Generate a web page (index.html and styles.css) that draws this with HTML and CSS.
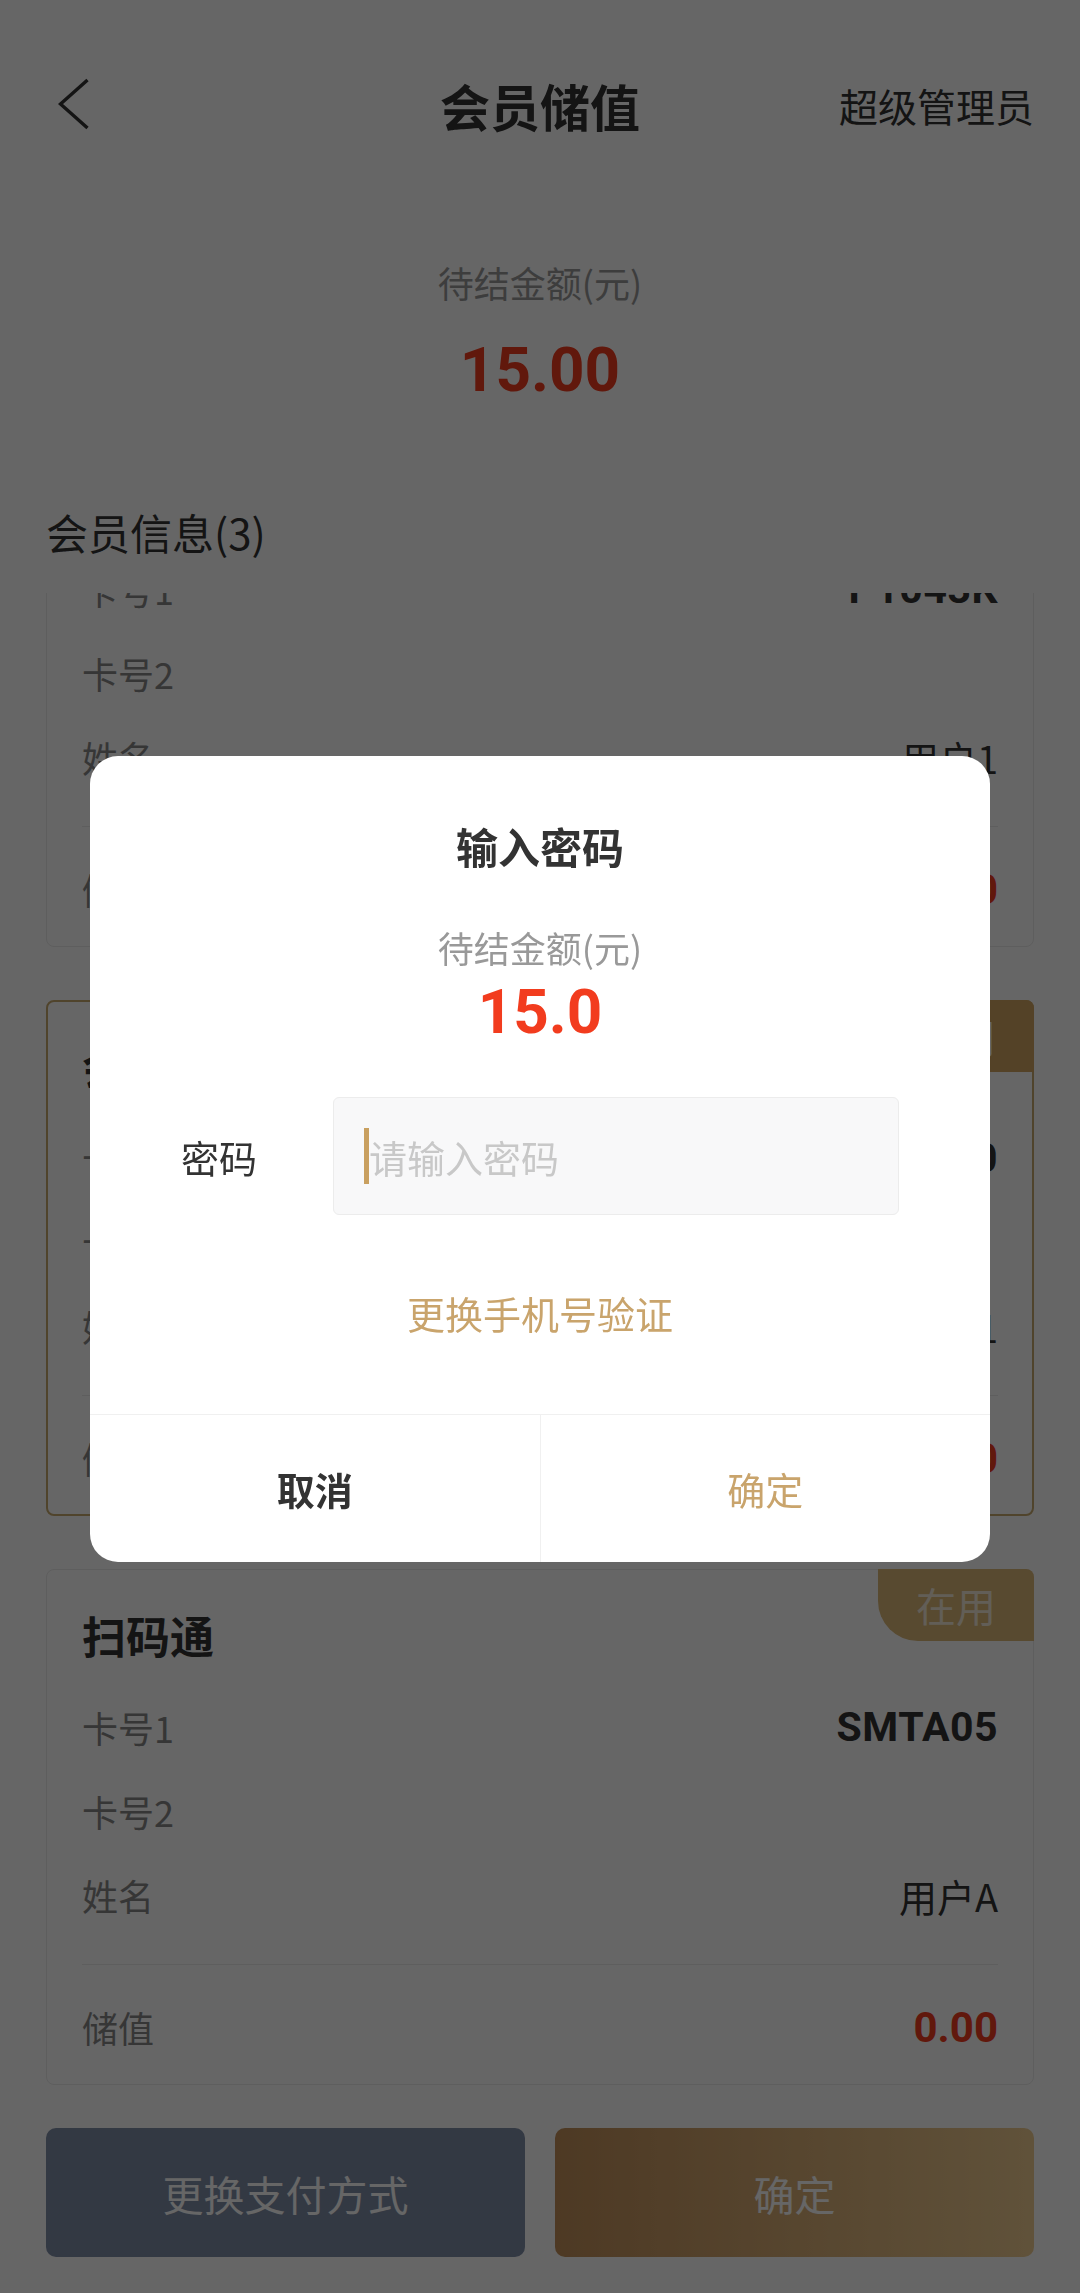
FILE: index.html
```html
<!DOCTYPE html>
<html lang="zh-CN">
<head>
<meta charset="utf-8">
<title>会员储值</title>
<link rel="stylesheet" href="styles.css">
</head>
<body>
<div class="page">
  <header class="nav">
    <span class="nav-back">
      <svg width="32" height="52" viewBox="0 0 32 52"><polyline points="29.5,2 2.5,26 29.5,50" fill="none" stroke="#333" stroke-width="3.4"/></svg>
    </span>
    <h1 class="nav-title">会员储值</h1>
    <span class="nav-user">超级管理员</span>
  </header>

  <section class="summary">
    <div class="summary-label">待结金额(元)</div>
    <div class="summary-amount">15.00</div>
  </section>

  <div class="section-title">会员信息(3)</div>

  <div class="card-list">
    <div class="card-track">
      <div class="card">
        <div class="card-title">会员卡</div>
        <div class="card-fields">
          <div class="field"><span class="field-label">卡号1</span><span class="field-value strong">P1043K</span></div>
          <div class="field"><span class="field-label">卡号2</span><span class="field-value"></span></div>
          <div class="field"><span class="field-label">姓名</span><span class="field-value">用户1</span></div>
        </div>
        <div class="card-divider"></div>
        <div class="field total"><span class="field-label">储值</span><span class="field-value money">0.00</span></div>
      </div>

      <div class="card active">
        <div class="card-title">会员卡</div>
        <span class="badge">在用</span>
        <div class="card-fields">
          <div class="field"><span class="field-label">卡号1</span><span class="field-value strong">HY0010</span></div>
          <div class="field"><span class="field-label">卡号2</span><span class="field-value"></span></div>
          <div class="field"><span class="field-label">姓名</span><span class="field-value">用户1</span></div>
        </div>
        <div class="card-divider"></div>
        <div class="field total"><span class="field-label">储值</span><span class="field-value money">0.00</span></div>
      </div>

      <div class="card">
        <div class="card-title">扫码通</div>
        <span class="badge muted">在用</span>
        <div class="card-fields">
          <div class="field"><span class="field-label">卡号1</span><span class="field-value strong">SMTA05</span></div>
          <div class="field"><span class="field-label">卡号2</span><span class="field-value"></span></div>
          <div class="field"><span class="field-label">姓名</span><span class="field-value">用户A</span></div>
        </div>
        <div class="card-divider"></div>
        <div class="field total"><span class="field-label">储值</span><span class="field-value money">0.00</span></div>
      </div>
    </div>
  </div>

  <footer class="actions">
    <button class="action-btn secondary">更换支付方式</button>
    <button class="action-btn primary">确定</button>
  </footer>
</div>

<div class="mask">
  <div class="dialog">
    <div class="dialog-title">输入密码</div>
    <div class="dialog-label">待结金额(元)</div>
    <div class="dialog-amount">15.0</div>
    <div class="pwd-row">
      <span class="pwd-label">密码</span>
      <div class="pwd-input"><span class="caret"></span><span class="placeholder">请输入密码</span></div>
    </div>
    <div class="switch-link">更换手机号验证</div>
    <div class="dialog-actions">
      <div class="dialog-btn cancel">取消</div>
      <div class="dialog-btn confirm">确定</div>
    </div>
  </div>
</div>
</body>
</html>
```

FILE: styles.css
```css
* { box-sizing: border-box; margin: 0; padding: 0; }
html, body { width: 1080px; height: 2293px; }
body {
  font-family: "Noto Sans CJK SC", "Noto Sans", sans-serif;
  background: #fff;
  color: #333;
  overflow: hidden;
}

.page {
  height: 2293px;
  display: flex;
  flex-direction: column;
  padding: 0 46px;
}

/* nav */
.nav {
  height: 210px;
  flex: none;
  display: grid;
  grid-template-columns: 1fr auto 1fr;
  align-items: center;
}
.nav-back { display: flex; margin-left: 12px; margin-top: -2px; }
.nav-title { font-size: 50px; line-height: 70px; font-weight: 700; color: #333; }
.nav-user { justify-self: end; font-size: 39px; line-height: 60px; color: #333; }

/* summary */
.summary {
  flex: none;
  display: flex;
  flex-direction: column;
  align-items: center;
  padding-top: 47px;
}
.summary-label { font-size: 36px; line-height: 50px; color: #999; }
.summary-amount {
  margin-top: 25px;
  font-family: Roboto, sans-serif;
  font-weight: 700;
  font-size: 62px;
  line-height: 76px;
  color: #f23c1e;
}

.section-title {
  flex: none;
  margin-top: 94px;
  font-size: 42px;
  line-height: 60px;
  color: #333;
}

/* list */
.card-list {
  flex: 1;
  min-height: 0;
  margin-top: 31px;
  overflow: hidden;
}
.card-track {
  margin-top: -162px;
  display: flex;
  flex-direction: column;
  gap: 53px;
}
.card {
  position: relative;
  background: #fff;
  border: 1px solid #ebebeb;
  border-radius: 8px;
  padding: 23px 35px 15px;
}
.card.active {
  border: 2px solid #c9aa6e;
  padding: 22px 34px 14px;
}
.card-title {
  height: 84px;
  display: flex;
  align-items: center;
  font-size: 44px;
  font-weight: 700;
  color: #333;
}
.card-fields { margin-top: 8px; }
.field {
  height: 84px;
  display: flex;
  align-items: center;
  justify-content: space-between;
}
.field-label { font-size: 36px; color: #888; }
.field-value { font-size: 38px; color: #333; }
.field-value.strong {
  font-family: Roboto, sans-serif;
  font-weight: 700;
  font-size: 41px;
  letter-spacing: 0.5px;
}
.field-value.money {
  font-family: Roboto, sans-serif;
  font-weight: 700;
  font-size: 42px;
  color: #f23c1e;
}
.card-divider { margin-top: 27px; height: 1px; background: #ececec; }
.field.total { margin-top: 20px; }

.badge {
  position: absolute;
  top: -1px;
  right: -1px;
  width: 156px;
  height: 72px;
  border-radius: 0 8px 0 40px;
  background: #d1a662;
  color: #fff;
  font-size: 40px;
  display: flex;
  align-items: center;
  justify-content: center;
}
.card.active .badge { top: -2px; right: -2px; }
.badge.muted { background: #dcb878; color: #f6ecd9; }

/* footer */
.actions {
  flex: none;
  display: flex;
  gap: 30px;
  padding: 20px 0 36px;
}
.action-btn {
  flex: 1;
  height: 129px;
  border: none;
  border-radius: 10px;
  font-family: "Noto Sans CJK SC", sans-serif;
  font-size: 41px;
  color: #fff;
}
.action-btn.secondary { background: #808ea8; }
.action-btn.primary { background: linear-gradient(90deg, #c2905a, #f0cd92); }

/* dialog */
.mask {
  position: fixed;
  inset: 0;
  background: rgba(0, 0, 0, 0.6);
  display: flex;
  justify-content: center;
  align-items: flex-start;
  padding-top: 756px;
}
.dialog {
  width: 900px;
  background: #fff;
  border-radius: 28px;
  display: flex;
  flex-direction: column;
  align-items: center;
  overflow: hidden;
}
.dialog-title { margin-top: 60px; font-size: 42px; line-height: 60px; font-weight: 700; color: #333; }
.dialog-label { margin-top: 46px; font-size: 36px; line-height: 50px; color: #999; }
.dialog-amount {
  font-family: Roboto, sans-serif;
  font-weight: 700;
  font-size: 62px;
  line-height: 80px;
  color: #f23c1e;
}
.pwd-row {
  margin-top: 45px;
  align-self: stretch;
  display: flex;
  align-items: center;
  padding: 0 91px;
}
.pwd-label { width: 152px; font-size: 38px; color: #333; }
.pwd-input {
  flex: 1;
  height: 118px;
  background: #f8f8f9;
  border: 1px solid #ececec;
  border-radius: 6px;
  display: flex;
  align-items: center;
  padding-left: 30px;
}
.caret { width: 5px; height: 56px; background: #c9a060; }
.placeholder { font-size: 38px; color: #c8c8c8; }
.switch-link { margin-top: 68px; font-size: 38px; line-height: 60px; color: #c9a46c; }
.dialog-actions {
  margin-top: 71px;
  align-self: stretch;
  height: 148px;
  display: flex;
  border-top: 1px solid #f0f0f0;
}
.dialog-btn {
  flex: 1;
  display: flex;
  align-items: center;
  justify-content: center;
  font-size: 38px;
}
.dialog-btn + .dialog-btn { border-left: 1px solid #f0f0f0; }
.dialog-btn.cancel { font-weight: 700; color: #333; }
.dialog-btn.confirm { color: #c9a46c; }
```
